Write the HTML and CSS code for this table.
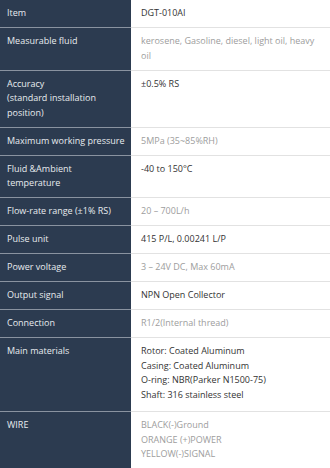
FILE: index.html
```html
<!DOCTYPE html>
<html>
<head>
  <title>DGT-010AI Specification</title>
  <link rel="stylesheet" href="styles.css">
</head>
<body>
  <table class="spec">
    <tr>
      <th>Item</th>
      <td>DGT-010AI</td>
    </tr>
    <tr class="muted">
      <th>Measurable fluid</th>
      <td>kerosene, Gasoline, diesel, light oil, heavy oil</td>
    </tr>
    <tr>
      <th>Accuracy<br>(standard installation position)</th>
      <td>±0.5% RS</td>
    </tr>
    <tr class="muted">
      <th>Maximum working pressure</th>
      <td>5MPa (35~85%RH)</td>
    </tr>
    <tr>
      <th>Fluid &amp;Ambient<br>temperature</th>
      <td>-40 to 150°C</td>
    </tr>
    <tr class="muted">
      <th>Flow-rate range (±1% RS)</th>
      <td>20 – 700L/h</td>
    </tr>
    <tr>
      <th>Pulse unit</th>
      <td>415 P/L, 0.00241 L/P</td>
    </tr>
    <tr class="muted">
      <th>Power voltage</th>
      <td>3 – 24V DC, Max 60mA</td>
    </tr>
    <tr>
      <th>Output signal</th>
      <td>NPN Open Collector</td>
    </tr>
    <tr class="muted">
      <th>Connection</th>
      <td>R1/2(Internal thread)</td>
    </tr>
    <tr class="list">
      <th>Main materials</th>
      <td>Rotor: Coated Aluminum<br>Casing: Coated Aluminum<br>O-ring: NBR(Parker N1500-75)<br>Shaft: 316 stainless steel</td>
    </tr>
    <tr class="muted">
      <th>WIRE</th>
      <td>BLACK(-)Ground<br>ORANGE (+)POWER<br>YELLOW(-)SIGNAL</td>
    </tr>
  </table>
</body>
</html>
```

FILE: styles.css
```css
body {
  margin: 0;
  background: #fff;
  font-family: "Open Sans", Arial, sans-serif;
  font-size: 9px;
}
.spec {
  width: 100%;
  border-collapse: collapse;
}
.spec th,
.spec td {
  padding: 6px 10px 6.5px 10px;
  line-height: 14.5px;
  text-align: left;
  vertical-align: top;
  font-weight: normal;
}
.spec th {
  width: 119px;
  padding-left: 7px;
  padding-right: 5px;
  background-color: #2c3b50;
  color: #e8ebef;
  border-bottom: 1px solid #8a93a0;
}
.spec td {
  color: #333;
  border-bottom: 1px solid #e2e2e2;
}
.spec tr.muted td {
  color: #9d9d9d;
}
.spec tr.list td {
  padding-bottom: 9px;
}
```
